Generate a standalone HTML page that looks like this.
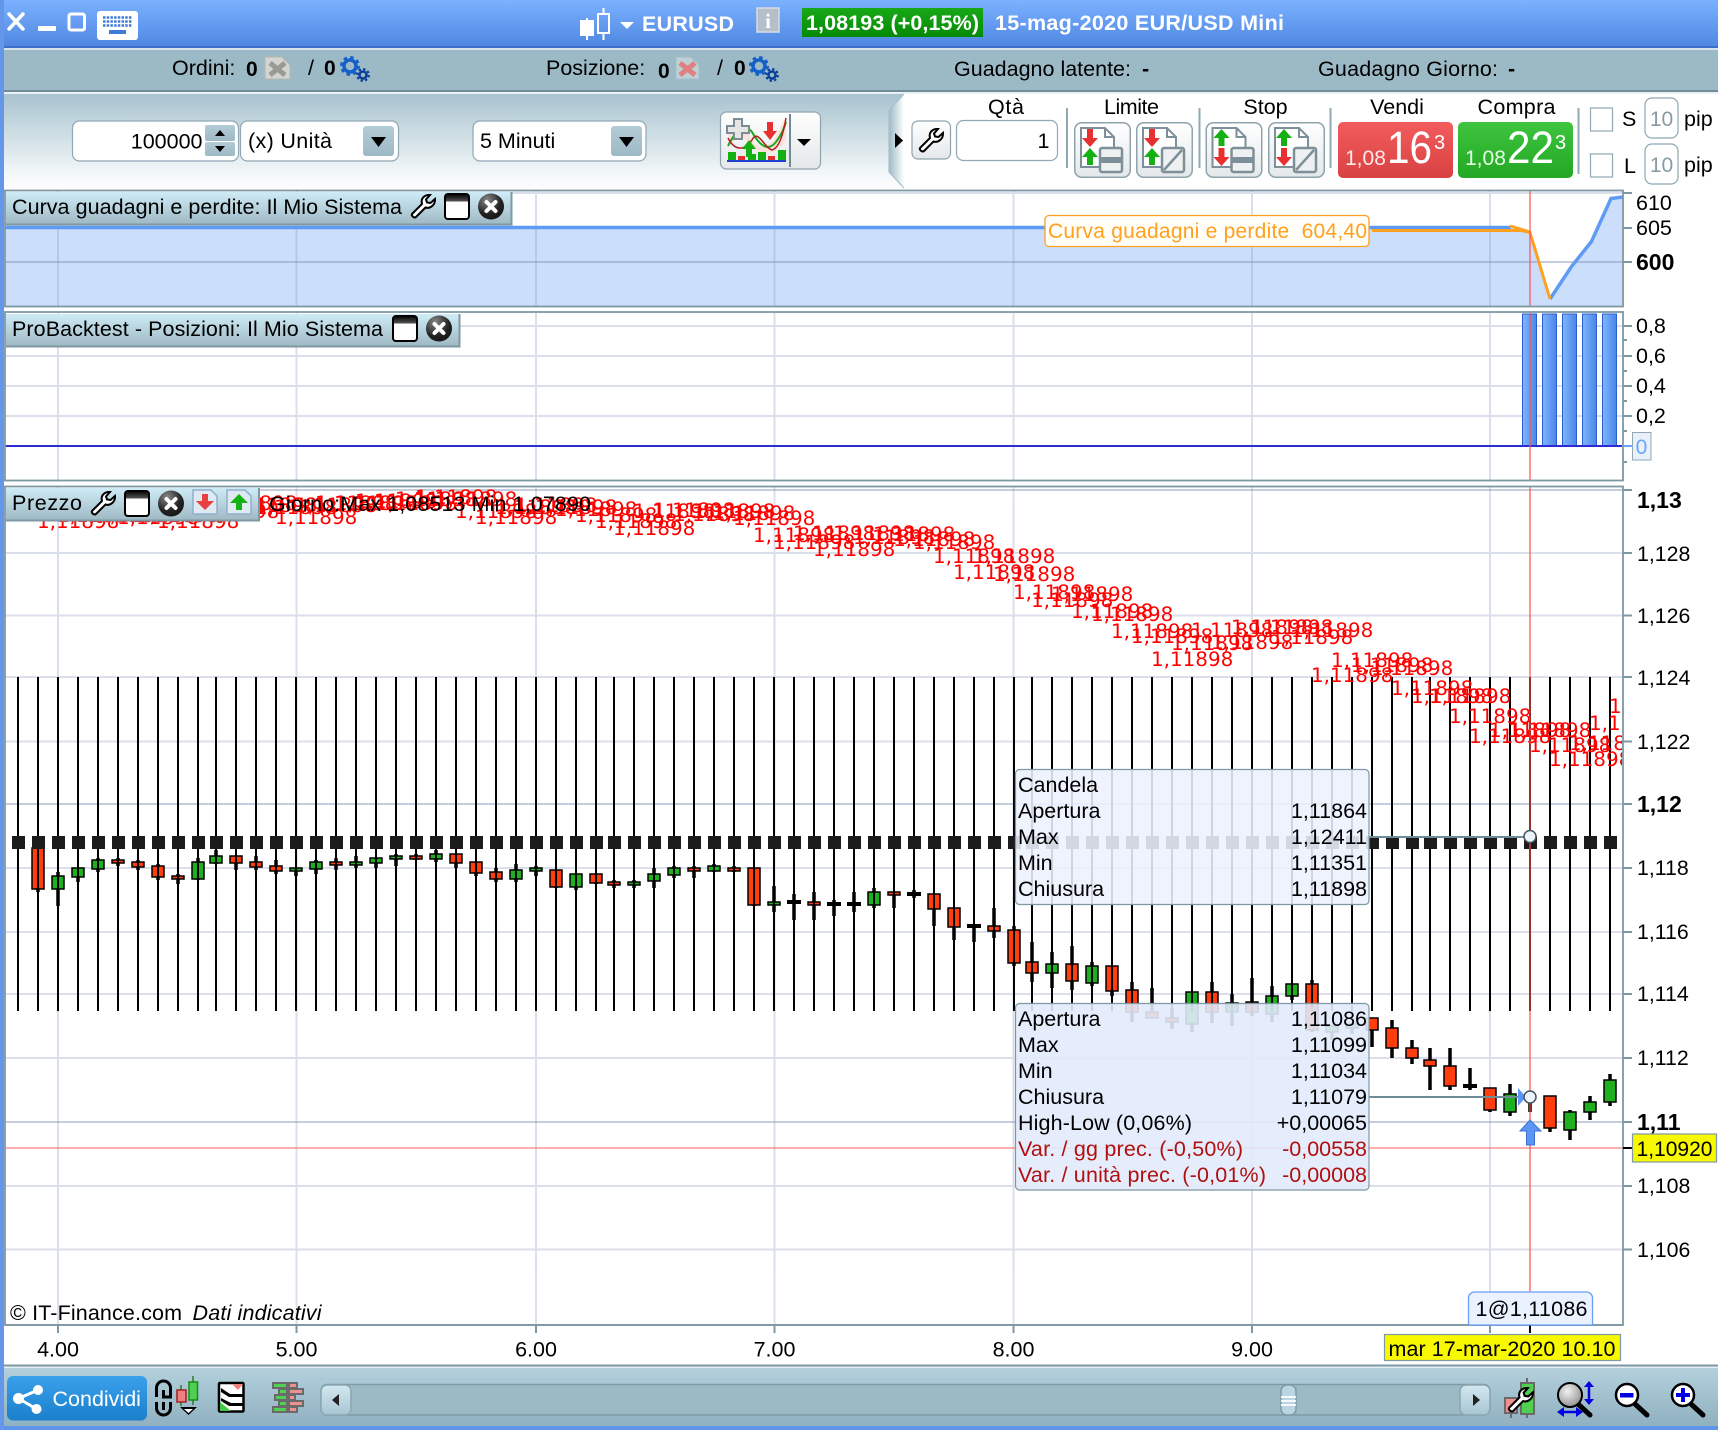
<!DOCTYPE html>
<html lang="it"><head><meta charset="utf-8"><title>EURUSD</title>
<style>html,body{margin:0;padding:0;background:#fff;overflow:hidden}svg{display:block;font-family:"Liberation Sans",Arial,sans-serif}</style></head>
<body>
<svg xmlns="http://www.w3.org/2000/svg" width="1718" height="1430" viewBox="0 0 1718 1430">
<defs>
<linearGradient id="gT" x1="0" y1="0" x2="0" y2="1"><stop offset="0" stop-color="#7bb1ff"/><stop offset="1" stop-color="#5088e2"/></linearGradient>
<linearGradient id="gTb" x1="0" y1="0" x2="0" y2="1"><stop offset="0" stop-color="#a8c3cf"/><stop offset=".8" stop-color="#f0f5f7"/><stop offset="1" stop-color="#fff"/></linearGradient>
<linearGradient id="gNotch" x1="0" y1="0" x2="1" y2="0"><stop offset="0" stop-color="#9dbac6"/><stop offset="1" stop-color="#fff"/></linearGradient>
<linearGradient id="gTab" x1="0" y1="0" x2="0" y2="1"><stop offset="0" stop-color="#cfebf6"/><stop offset="1" stop-color="#9db8c3"/></linearGradient>
<linearGradient id="gDd" x1="0" y1="0" x2="0" y2="1"><stop offset="0" stop-color="#b4ccd6"/><stop offset="1" stop-color="#9cb9c5"/></linearGradient>
<linearGradient id="gBtn" x1="0" y1="0" x2="0" y2="1"><stop offset="0" stop-color="#fff"/><stop offset="1" stop-color="#e4e8ea"/></linearGradient>
<linearGradient id="gR" x1="0" y1="0" x2="0" y2="1"><stop offset="0" stop-color="#f25c5c"/><stop offset="1" stop-color="#d84242"/></linearGradient>
<linearGradient id="gG" x1="0" y1="0" x2="0" y2="1"><stop offset="0" stop-color="#3fc43f"/><stop offset="1" stop-color="#22a822"/></linearGradient>
<linearGradient id="gGp" x1="0" y1="0" x2="0" y2="1"><stop offset="0" stop-color="#18a818"/><stop offset="1" stop-color="#068a06"/></linearGradient>
<linearGradient id="gBar" x1="0" y1="0" x2="1" y2="0"><stop offset="0" stop-color="#80b6fd"/><stop offset="1" stop-color="#4a85e8"/></linearGradient>
<linearGradient id="gBot" x1="0" y1="0" x2="0" y2="1"><stop offset="0" stop-color="#b3d0dc"/><stop offset="1" stop-color="#90b1c1"/></linearGradient>
<linearGradient id="gShare" x1="0" y1="0" x2="0" y2="1"><stop offset="0" stop-color="#3aa0ea"/><stop offset="1" stop-color="#1a80cc"/></linearGradient>
<linearGradient id="gWin" x1="0" y1="0" x2="0" y2="1"><stop offset="0" stop-color="#000"/><stop offset=".3" stop-color="#555"/><stop offset=".31" stop-color="#fff"/></linearGradient>
<linearGradient id="gSb" x1="0" y1="0" x2="0" y2="1"><stop offset="0" stop-color="#d4e8f1"/><stop offset="1" stop-color="#a6c6d3"/></linearGradient>
<radialGradient id="gCl" cx=".35" cy=".25" r=".9"><stop offset="0" stop-color="#888"/><stop offset=".6" stop-color="#222"/><stop offset="1" stop-color="#111"/></radialGradient>
<radialGradient id="gLens" cx=".4" cy=".35" r=".7"><stop offset="0" stop-color="#f2f2f2"/><stop offset="1" stop-color="#8e8e8e"/></radialGradient>
<clipPath id="cP3"><rect x="5" y="487" width="1618" height="838"/></clipPath>
<symbol id="wr" viewBox="0 0 26 26" overflow="visible"><path d="M2 21 12 11C10.500 6 14 1.500 20 2L16 6.500 17 9.500 20.500 10 25 6C25.500 12 20 16 15.500 14.500L6 24C4.500 25.500 1 23 2 21Z" fill="#fff" stroke="#000" stroke-width="2"/></symbol>
<symbol id="win" viewBox="0 0 26 27"><rect x="1" y="1" width="24" height="25" rx="3" fill="url(#gWin)" stroke="#000" stroke-width="2"/></symbol>
<symbol id="cl" viewBox="0 0 26 27"><circle cx="13" cy="13.500" r="13" fill="url(#gCl)"/><path d="M8.500 9 17.500 18M17.500 9 8.500 18" stroke="#fff" stroke-width="4" stroke-linecap="round"/></symbol>
<symbol id="gear" viewBox="0 0 30 26"><circle cx="10" cy="10" r="6" fill="none" stroke="#1560c8" stroke-width="3.500"/><circle cx="10" cy="10" r="8.500" fill="none" stroke="#1560c8" stroke-width="3" stroke-dasharray="3.400 3.270"/><circle cx="23" cy="19" r="3.500" fill="none" stroke="#0c3f98" stroke-width="2.500"/><circle cx="23" cy="19" r="5.800" fill="none" stroke="#0c3f98" stroke-width="2.200" stroke-dasharray="2.400 2.150"/></symbol>
<symbol id="ddb" viewBox="0 0 31 30"><rect x="0" y="0" width="31" height="30" rx="3" fill="url(#gDd)"/><path d="M8 11H23L15.500 21Z" fill="#000"/></symbol>
<symbol id="b1" viewBox="0 0 57 56"><rect x=".75" y=".75" width="55.500" height="54.500" rx="7" fill="url(#gBtn)" stroke="#8fa3ac" stroke-width="1.500"/><path d="M7 6H31L40 15V45H7Z" fill="#fff" stroke="#7d8f98" stroke-width="2"/><path d="M31 6V15H40" fill="none" stroke="#7d8f98" stroke-width="2"/><rect x="26" y="26" width="22" height="24" rx="2" fill="#eef0f1" stroke="#7d8f98" stroke-width="2.500"/></symbol>
</defs>

<!-- window chrome -->
<rect width="1718" height="1430" fill="#fff"/>
<rect x="0" y="0" width="1718" height="46" fill="url(#gT)"/>
<rect x="0" y="46" width="1718" height="2" fill="#3d6fc8"/>
<rect x="0" y="48" width="1718" height="2" fill="#d5e3ea"/>
<rect x="4" y="50" width="1714" height="40" fill="#9cbac6"/>
<rect x="4" y="90" width="1714" height="2" fill="#6f8c98"/>
<rect x="4" y="92" width="1714" height="2" fill="#e8f0f3"/>
<rect x="4" y="94" width="900" height="96" fill="url(#gTb)"/>
<path d="M904 94 889 110V172L904 188Z" fill="url(#gNotch)"/>
<path d="M904 94 889 110V172L904 188" fill="none" stroke="#a9bfc9" stroke-width="1.200"/>

<!-- title bar -->
<path d="M9 14 23 29M23 14 9 29" stroke="#fff" stroke-width="3.500" stroke-linecap="round"/>
<rect x="38" y="26" width="18" height="5" rx="1" fill="#fff"/>
<rect x="69" y="14" width="15.500" height="16" rx="2" fill="none" stroke="#fff" stroke-width="3"/>
<rect x="97" y="11" width="41" height="29" rx="3" fill="#fff"/>
<path d="M103 17.500h29M103 21.500h29M103 25.500h29" stroke="#3f7bd8" stroke-width="2.500" stroke-dasharray="2.500 1.200"/>
<rect x="109" y="30" width="17" height="4" fill="#3f7bd8"/>
<rect x="580" y="20" width="14" height="16" fill="#fff"/><path d="M587 18V40" stroke="#fff" stroke-width="2"/>
<rect x="598" y="14" width="11" height="19" fill="none" stroke="#fff" stroke-width="2"/><path d="M603.500 8V14M603.500 33V40" stroke="#fff" stroke-width="2"/>
<path d="M620 22H634L627 29Z" fill="#fff"/>
<text x="642" y="31" font-size="21.500" font-weight="700" fill="#fff" textLength="92">EURUSD</text>
<rect x="757" y="8" width="22" height="24" fill="#b4bfca" stroke="#d6dde3" stroke-width="1.500"/>
<text x="768" y="28" font-size="21" font-weight="700" text-anchor="middle" fill="#fff" font-family="Liberation Serif">i</text>
<rect x="802" y="8" width="181" height="29" fill="url(#gGp)"/>
<text x="892.500" y="30" font-size="21.500" font-weight="700" text-anchor="middle" fill="#fff" textLength="173">1,08193 (+0,15%)</text>
<text x="995" y="30" font-size="21.500" font-weight="700" fill="#fff" textLength="289">15-mag-2020  EUR/USD Mini</text>

<!-- status bar -->
<text x="172" y="75" font-size="21.500">Ordini:</text>
<text x="246" y="76" font-size="21" font-weight="700">0</text>
<path d="M265 57H282L290 65V79H265Z" fill="#d4d4d0" stroke="#b5b5b0"/><path d="M270 63 285 75M285 63 270 75" stroke="#9a9a95" stroke-width="5"/>
<text x="308" y="75" font-size="21.500">/</text>
<text x="324" y="75" font-size="21" font-weight="700">0</text>
<use href="#gear" x="340" y="56" width="30" height="26"/>
<text x="546" y="75" font-size="21.500">Posizione:</text>
<text x="658" y="78" font-size="21" font-weight="700">0</text>
<path d="M676 57H691L699 65V79H676Z" fill="#bdd0d8" stroke="#a8bcc5"/><path d="M680 63 695 75M695 63 680 75" stroke="#e08080" stroke-width="5"/>
<text x="717" y="75" font-size="21.500">/</text>
<text x="734" y="75" font-size="21" font-weight="700">0</text>
<use href="#gear" x="749" y="56" width="30" height="26"/>
<text x="954" y="76" font-size="21.500" textLength="177">Guadagno latente:</text>
<text x="1142" y="76" font-size="21.500" font-weight="700">-</text>
<text x="1318" y="76" font-size="21.500" textLength="180">Guadagno Giorno:</text>
<text x="1508" y="76" font-size="21.500" font-weight="700">-</text>

<!-- toolbar left -->
<rect x="72.500" y="121" width="166" height="40" rx="7" fill="#fff" stroke="#8fa8b4" stroke-width="1.200"/>
<text x="202.500" y="148.500" font-size="21.500" text-anchor="end">100000</text>
<rect x="205" y="125" width="30" height="16" rx="2" fill="url(#gDd)"/><rect x="205" y="142" width="30" height="14" rx="2" fill="url(#gDd)"/>
<path d="M215 136H225L220 130ZM215 146H225L220 152Z" fill="#000"/>
<rect x="240.500" y="121" width="158" height="40" rx="7" fill="#fff" stroke="#8fa8b4" stroke-width="1.200"/>
<text x="248" y="148" font-size="21.500" textLength="84">(x) Unità</text>
<use href="#ddb" x="363" y="126" width="31" height="30"/>
<rect x="473" y="121" width="173" height="40" rx="7" fill="#fff" stroke="#8fa8b4" stroke-width="1.200"/>
<text x="480" y="148" font-size="21.500">5 Minuti</text>
<use href="#ddb" x="611" y="126" width="31" height="30"/>
<rect x="720.500" y="112" width="100" height="57" rx="6" fill="url(#gBtn)" stroke="#8fa3ac" stroke-width="1.200"/>
<rect x="789" y="114" width="2" height="53" fill="#6f8c98"/>
<path d="M797 139H811L804 146Z" fill="#000"/>
<path d="M728 136C738 120 744 124 752 140C758 150 770 150 778 132 782 124 784 120 786 116V140C780 150 768 158 756 150 748 142 742 134 738 138 732 142 728 148 728 146Z" fill="#ffdcd5" opacity=".8"/>
<path d="M728 146C736 130 744 122 752 132C760 146 768 152 776 142C782 134 784 128 786 122" fill="none" stroke="#1ea81e" stroke-width="2"/>
<path d="M728 138C734 150 744 152 752 140C758 128 764 148 772 150 780 148 784 130 786 118" fill="none" stroke="#b42020" stroke-width="1.500"/>
<path d="M734 119H742V126H749V133H742V139H734V133H727V126H734Z" fill="#e6e6e6" stroke="#7c8c94" stroke-width="2"/>
<path d="M767 122h6v9h4l-7 9-7-9h4z" fill="#e83030"/>
<path d="M749 140l7 9h-4v8h-6v-8h-4z" fill="#14b014"/>
<path d="M728 152h8v8h-8zM758 152h8v8h-8zM778 150h8v10h-8z" fill="#14b014"/>
<path d="M738 156h7v4h-7zM768 156h7v4h-7z" fill="#e03030"/><path d="M748 154h8v6h-8z" fill="#14b014"/>
<rect x="727" y="160" width="59" height="2" fill="#2040d0"/>

<!-- toolbar right -->
<path d="M895 133 903 140.500 895 148Z" fill="#000"/>
<rect x="912" y="121" width="38.500" height="38" rx="6" fill="url(#gBtn)" stroke="#8fa3ac" stroke-width="1.200"/>
<use href="#wr" x="918" y="127" width="26" height="26"/>
<text x="1006" y="114" font-size="21.500" text-anchor="middle" textLength="36">Qtà</text>
<rect x="956.500" y="120.500" width="101" height="40" rx="7" fill="#fff" stroke="#8fa8b4" stroke-width="1.200"/>
<text x="1049.500" y="148" font-size="21.500" text-anchor="end">1</text>
<path d="M1067 108V168M1199.500 108V168M1330.500 108V168M1578.500 108V174" stroke="#8fa8b4" stroke-width="2"/>
<text x="1131.500" y="114" font-size="21.500" text-anchor="middle" textLength="55">Limite</text>
<text x="1265.500" y="114" font-size="21.500" text-anchor="middle">Stop</text>
<text x="1397" y="114" font-size="21.500" text-anchor="middle">Vendi</text>
<text x="1516.500" y="114" font-size="21.500" text-anchor="middle" textLength="78">Compra</text>
<use href="#b1" x="1074" y="122" width="57" height="56"/>
<g transform="translate(1074 122)"><rect x="26" y="35" width="22" height="6" fill="#7d8f98"/><path d="M13 7h6v9h5l-8 9-8-9h5z" fill="#e83030"/><path d="M16 26l8 9h-5v8h-6v-8h-5z" fill="#14b014"/></g>
<use href="#b1" x="1136" y="122" width="57" height="56"/>
<g transform="translate(1136 122)"><path d="M28 48 46 28" stroke="#7d8f98" stroke-width="2.500"/><path d="M13 7h6v9h5l-8 9-8-9h5z" fill="#e83030"/><path d="M16 26l8 9h-5v8h-6v-8h-5z" fill="#14b014"/></g>
<use href="#b1" x="1205.500" y="122" width="57" height="56"/>
<g transform="translate(1205.500 122)"><rect x="26" y="35" width="22" height="6" fill="#7d8f98"/><path d="M16 7l8 9h-5v8h-6v-8h-5z" fill="#14b014"/><path d="M13 26h6v9h5l-8 9-8-9h5z" fill="#e83030"/></g>
<use href="#b1" x="1268" y="122" width="57" height="56"/>
<g transform="translate(1268 122)"><path d="M28 48 46 28" stroke="#7d8f98" stroke-width="2.500"/><path d="M16 7l8 9h-5v8h-6v-8h-5z" fill="#14b014"/><path d="M13 26h6v9h5l-8 9-8-9h5z" fill="#e83030"/></g>
<rect x="1338" y="122" width="115" height="56" rx="5" fill="url(#gR)"/>
<text x="1345" y="165" font-size="21" fill="#ffe8e8">1,08</text>
<text x="1387" y="163" font-size="45" fill="#fff" textLength="45" lengthAdjust="spacingAndGlyphs">16</text>
<text x="1434" y="149" font-size="20" fill="#fff">3</text>
<rect x="1458" y="122" width="115" height="56" rx="5" fill="url(#gG)"/>
<text x="1465" y="165" font-size="21" fill="#e6ffe6">1,08</text>
<text x="1507" y="163" font-size="45" fill="#fff" textLength="47" lengthAdjust="spacingAndGlyphs">22</text>
<text x="1555" y="149" font-size="20" fill="#fff">3</text>
<rect x="1590.500" y="108" width="22" height="23" fill="#fff" stroke="#8fa8b4" stroke-width="1.200"/>
<rect x="1590.500" y="154" width="22" height="23" fill="#fff" stroke="#8fa8b4" stroke-width="1.200"/>
<text x="1622" y="126" font-size="21.500">S</text><text x="1624" y="173" font-size="21.500" font-weight="400">L</text>
<rect x="1645" y="98" width="33" height="40" rx="7" fill="#fff" stroke="#8fa8b4" stroke-width="1.200"/>
<rect x="1645" y="144" width="33" height="40" rx="7" fill="#fff" stroke="#8fa8b4" stroke-width="1.200"/>
<text x="1661.500" y="126" font-size="21" text-anchor="middle" fill="#8a9aa5">10</text><text x="1661.500" y="172" font-size="21" text-anchor="middle" fill="#8a9aa5">10</text>
<text x="1684" y="126" font-size="21.500">pip</text><text x="1684" y="172" font-size="21.500">pip</text>

<!-- panel 1 -->
<path d="M5 228H1510.500L1530 232 1550 299 1571.500 266.500 1591.500 241.500 1611 198.500 1623 197V306H5Z" fill="#cbdffc"/>
<g stroke="#8090b8" stroke-width="2" opacity=".28" fill="none">
<path d="M58 191V306M296.500 191V306M536 191V306M774.500 191V306M1013.500 191V306M1252 191V306M1490 191V306"/>
<path d="M5 193H1623"/>
</g>
<path d="M5 262H1623" stroke="#8090b8" stroke-width="2" opacity=".45"/>
<path d="M5 227.500H1511" stroke="#5f9bf5" stroke-width="3.500" fill="none"/>
<path d="M1550 299 1571.500 266.500 1591.500 241.500 1611 198.500 1623 197" stroke="#5f9bf5" stroke-width="3.500" fill="none"/>
<path d="M1372 230.500H1521L1530 232.500 1550 299" stroke="#ffa020" stroke-width="3" fill="none"/>
<path d="M1510 226 1530 232" stroke="#ffa020" stroke-width="3" fill="none"/>

<!-- panel 2 -->
<g stroke="#8090b8" stroke-width="2" opacity=".28" fill="none">
<path d="M58 313V480M296.500 313V480M536 313V480M774.500 313V480M1013.500 313V480M1252 313V480M1490 313V480"/>
<path d="M5 326H1623M5 356H1623M5 386H1623M5 416H1623"/>
</g>
<g fill="url(#gBar)" stroke="#2a5ed0" stroke-width="1">
<rect x="1522.500" y="314" width="14" height="132"/><rect x="1542.500" y="314" width="14" height="132"/><rect x="1562.500" y="314" width="14" height="132"/><rect x="1582.500" y="314" width="14" height="132"/><rect x="1602.500" y="314" width="14" height="132"/>
</g>
<path d="M5 446H1622" stroke="#2c2cd4" stroke-width="2"/>

<!-- panel 3 grid -->
<g stroke="#8090b8" stroke-width="2" opacity=".28" fill="none">
<path d="M58 487V1325M296.500 487V1325M536 487V1325M774.500 487V1325M1013.500 487V1325M1252 487V1325M1490 487V1325"/>
<path d="M5 553H1623M5 615.500H1623M5 677H1623M5 741.500H1623M5 868H1623M5 932H1623M5 994H1623M5 1058H1623M5 1186H1623M5 1249.500H1623"/>
</g>
<path d="M5 490H1623M5 804H1623M5 1122H1623" stroke="#8090b8" stroke-width="2" opacity=".45" fill="none"/>

<!-- wicks -->
<path fill="none" stroke="#000" stroke-width="3.500" d="M38 848V892M58 872V906M78 868V882M98 858V872M118 858V866M138 860V870M158 864V880M178 874V884M198 858V880M216 850V864M236 856V870M256 856V870M276 860V874M296 868V876M316 860V874M336 858V870M356 856V868M376 858V868M396 854V866M416 854V860M436 850V862M456 854V868M476 862V876M496 868V882M516 864V882M536 866V876M556 870V888M576 874V890M596 874V884M614 880V888M634 880V888M654 868V888M674 866V878M694 866V878M714 864V872M734 866V872M754 868V906M774 886V912M794 894V920M814 892V920M834 900V916M854 892V912M874 888V908M894 892V908M914 890V898M934 894V926M954 908V940M974 924V942M994 908V938M1014 926V966M1032 942V982M1052 952V988M1072 946V990M1092 962V986M1112 966V996M1132 982V1022M1152 988V1018M1172 1008V1029M1192 992V1032M1212 982V1023M1232 994V1026M1252 978V1016M1272 986V1022M1292 984V1000M1312 980V1032M1332 1026V1040M1352 1024V1034M1372 1018V1047M1392 1020V1058M1412 1040V1064M1430 1048V1090M1450 1048V1090M1470 1068V1090M1490 1088V1112M1510 1084V1116M1530 1094V1112M1550 1096V1132M1570 1110V1140M1590 1096V1120M1610 1074V1106"/>
<!-- red bodies -->
<path fill="#ff3d0d" stroke="#000" stroke-width="1.500" d="M32 848h12v41h-12zM112 860h12v3h-12zM132 862h12v5h-12zM152 866h12v11h-12zM172 876h12v3h-12zM230 856h12v7h-12zM250 862h12v5h-12zM270 866h12v5h-12zM330 862h12v3h-12zM410 856h12v3h-12zM450 854h12v9h-12zM470 862h12v11h-12zM490 872h12v7h-12zM550 870h12v17h-12zM590 874h12v9h-12zM608 882h12v3h-12zM688 868h12v3h-12zM728 868h12v3h-12zM748 868h12v37h-12zM808 902h12v3h-12zM888 892h12v3h-12zM928 894h12v15h-12zM948 908h12v19h-12zM988 926h12v5h-12zM1008 930h12v33h-12zM1026 962h12v11h-12zM1066 964h12v17h-12zM1106 966h12v25h-12zM1126 990h12v22h-12zM1146 1012h12v6h-12zM1166 1018h12v4h-12zM1206 992h12v20h-12zM1246 1002h12v10h-12zM1306 984h12v46h-12zM1366 1018h12v12h-12zM1386 1028h12v20h-12zM1406 1048h12v10h-12zM1424 1060h12v6h-12zM1444 1066h12v20h-12zM1484 1088h12v22h-12zM1544 1096h12v32h-12z"/>
<!-- green bodies -->
<path fill="#1eb01e" stroke="#000" stroke-width="1.500" d="M52 876h12v13h-12zM72 868h12v9h-12zM92 860h12v9h-12zM192 862h12v17h-12zM210 856h12v7h-12zM290 868h12v3h-12zM310 862h12v7h-12zM350 862h12v3h-12zM370 858h12v5h-12zM390 856h12v3h-12zM430 854h12v5h-12zM510 870h12v9h-12zM530 868h12v3h-12zM570 874h12v13h-12zM628 882h12v3h-12zM648 874h12v7h-12zM668 868h12v7h-12zM708 866h12v5h-12zM768 902h12v3h-12zM868 892h12v13h-12zM1046 964h12v9h-12zM1086 966h12v17h-12zM1186 992h12v32h-12zM1226 1003h12v9h-12zM1266 996h12v18h-12zM1286 984h12v12h-12zM1326 1026h12v6h-12zM1346 1024h12v4h-12zM1504 1094h12v18h-12zM1564 1112h12v18h-12zM1584 1102h12v10h-12zM1604 1080h12v22h-12z"/>
<!-- doji bars -->
<path fill="#000" d="M787 900h14v4h-14zM827 902h14v4h-14zM847 902h14v4h-14zM907 892h14v4h-14zM967 924h14v4h-14zM1463 1084h14v4h-14z"/>
<!-- sticks -->
<path fill="none" stroke="#000" stroke-width="2" d="M18 677V1011M38 677V1011M58 677V1011M78 677V1011M98 677V1011M118 677V1011M138 677V1011M158 677V1011M178 677V1011M198 677V1011M216 677V1011M236 677V1011M256 677V1011M276 677V1011M296 677V1011M316 677V1011M336 677V1011M356 677V1011M376 677V1011M396 677V1011M416 677V1011M436 677V1011M456 677V1011M476 677V1011M496 677V1011M516 677V1011M536 677V1011M556 677V1011M576 677V1011M596 677V1011M614 677V1011M634 677V1011M654 677V1011M674 677V1011M694 677V1011M714 677V1011M734 677V1011M754 677V1011M774 677V1011M794 677V1011M814 677V1011M834 677V1011M854 677V1011M874 677V1011M894 677V1011M914 677V1011M934 677V1011M954 677V1011M974 677V1011M994 677V1011M1014 677V1011M1032 677V1011M1052 677V1011M1072 677V1011M1092 677V1011M1112 677V1011M1132 677V1011M1152 677V1011M1172 677V1011M1192 677V1011M1212 677V1011M1232 677V1011M1252 677V1011M1272 677V1011M1292 677V1011M1312 677V1011M1332 677V1011M1352 677V1011M1372 677V1011M1392 677V1011M1412 677V1011M1430 677V1011M1450 677V1011M1470 677V1011M1490 677V1011M1510 677V1011M1530 677V1011M1550 677V1011M1570 677V1011M1590 677V1011M1610 677V1011"/>
<!-- black squares -->
<path fill="#1b1b1b" d="M12 836h13v13h-13zM32 836h13v13h-13zM52 836h13v13h-13zM72 836h13v13h-13zM92 836h13v13h-13zM112 836h13v13h-13zM132 836h13v13h-13zM152 836h13v13h-13zM172 836h13v13h-13zM192 836h13v13h-13zM210 836h13v13h-13zM230 836h13v13h-13zM250 836h13v13h-13zM270 836h13v13h-13zM290 836h13v13h-13zM310 836h13v13h-13zM330 836h13v13h-13zM350 836h13v13h-13zM370 836h13v13h-13zM390 836h13v13h-13zM410 836h13v13h-13zM430 836h13v13h-13zM450 836h13v13h-13zM470 836h13v13h-13zM490 836h13v13h-13zM510 836h13v13h-13zM530 836h13v13h-13zM550 836h13v13h-13zM570 836h13v13h-13zM590 836h13v13h-13zM608 836h13v13h-13zM628 836h13v13h-13zM648 836h13v13h-13zM668 836h13v13h-13zM688 836h13v13h-13zM708 836h13v13h-13zM728 836h13v13h-13zM748 836h13v13h-13zM768 836h13v13h-13zM788 836h13v13h-13zM808 836h13v13h-13zM828 836h13v13h-13zM848 836h13v13h-13zM868 836h13v13h-13zM888 836h13v13h-13zM908 836h13v13h-13zM928 836h13v13h-13zM948 836h13v13h-13zM968 836h13v13h-13zM988 836h13v13h-13zM1008 836h13v13h-13zM1026 836h13v13h-13zM1046 836h13v13h-13zM1066 836h13v13h-13zM1086 836h13v13h-13zM1106 836h13v13h-13zM1126 836h13v13h-13zM1146 836h13v13h-13zM1166 836h13v13h-13zM1186 836h13v13h-13zM1206 836h13v13h-13zM1226 836h13v13h-13zM1246 836h13v13h-13zM1266 836h13v13h-13zM1286 836h13v13h-13zM1306 836h13v13h-13zM1326 836h13v13h-13zM1346 836h13v13h-13zM1366 836h13v13h-13zM1386 836h13v13h-13zM1406 836h13v13h-13zM1424 836h13v13h-13zM1444 836h13v13h-13zM1464 836h13v13h-13zM1484 836h13v13h-13zM1504 836h13v13h-13zM1524 836h13v13h-13zM1544 836h13v13h-13zM1564 836h13v13h-13zM1584 836h13v13h-13zM1604 836h13v13h-13z"/>

<!-- red labels -->
<g clip-path="url(#cP3)" fill="#ff0000" font-family="'DejaVu Sans',sans-serif" font-size="19.900" transform="translate(-1 0)">
<text x="38" y="528">1,11898</text><text x="58" y="522">1,11898</text><text x="78" y="521">1,11898</text><text x="98" y="522">1,11898</text><text x="118" y="524">1,11898</text><text x="138" y="522">1,11898</text><text x="158" y="528">1,11898</text><text x="178" y="520">1,11898</text><text x="198" y="518">1,11898</text><text x="216" y="510">1,11898</text><text x="236" y="512">1,11898</text><text x="256" y="514">1,11898</text><text x="276" y="524">1,11898</text><text x="296" y="512">1,11898</text><text x="316" y="510">1,11898</text><text x="336" y="510">1,11898</text><text x="356" y="508">1,11898</text><text x="376" y="510">1,11898</text><text x="396" y="506">1,11898</text><text x="416" y="504">1,11898</text><text x="436" y="506">1,11898</text><text x="456" y="518">1,11898</text><text x="476" y="524">1,11898</text><text x="496" y="514">1,11898</text><text x="516" y="512">1,11898</text><text x="536" y="514">1,11898</text><text x="556" y="516">1,11898</text><text x="576" y="522">1,11898</text><text x="596" y="528">1,11898</text><text x="614" y="535">1,11898</text><text x="634" y="518">1,11898</text><text x="654" y="517">1,11898</text><text x="674" y="521">1,11898</text><text x="694" y="518">1,11898</text><text x="714" y="520">1,11898</text><text x="734" y="525">1,11898</text><text x="754" y="542">1,11898</text><text x="774" y="549">1,11898</text><text x="794" y="540">1,11898</text><text x="814" y="556">1,11898</text><text x="834" y="540">1,11898</text><text x="854" y="544">1,11898</text><text x="874" y="541">1,11898</text><text x="894" y="546">1,11898</text><text x="914" y="549">1,11898</text><text x="934" y="563">1,11898</text><text x="954" y="579">1,11898</text><text x="974" y="563">1,11898</text><text x="994" y="581">1,11898</text><text x="1014" y="599">1,11898</text><text x="1032" y="607">1,11898</text><text x="1052" y="601">1,11898</text><text x="1072" y="618">1,11898</text><text x="1092" y="621">1,11898</text><text x="1112" y="638">1,11898</text><text x="1132" y="643">1,11898</text><text x="1152" y="666">1,11898</text><text x="1172" y="650">1,11898</text><text x="1192" y="637">1,11898</text><text x="1212" y="649">1,11898</text><text x="1232" y="634">1,11898</text><text x="1252" y="634">1,11898</text><text x="1272" y="644">1,11898</text><text x="1292" y="637">1,11898</text><text x="1312" y="682">1,11898</text><text x="1332" y="667">1,11898</text><text x="1352" y="672">1,11898</text><text x="1372" y="675">1,11898</text><text x="1392" y="695">1,11898</text><text x="1412" y="703">1,11898</text><text x="1430" y="703">1,11898</text><text x="1450" y="723">1,11898</text><text x="1470" y="743">1,11898</text><text x="1490" y="737">1,11898</text><text x="1510" y="737">1,11898</text><text x="1530" y="752">1,11898</text><text x="1550" y="766">1,11898</text><text x="1570" y="750">1,11898</text><text x="1590" y="730">1,11898</text><text x="1610" y="713">1,11898</text>
</g>
<text x="269" y="511" font-size="21.500" textLength="322">Giorno:Max 1,08513 Min 1,07890</text>

<!-- crosshair -->
<path d="M5 1148H1623" stroke="#ff5a5a" stroke-width="1.500" opacity=".65"/>
<path d="M1530 191V306M1530 313V480M1530 487V1325" stroke="#ff5050" stroke-width="2" opacity=".6" fill="none"/>

<!-- tooltips -->
<path d="M1369 837H1525M1369 1097H1525" stroke="#6e8c98" stroke-width="2"/>
<path d="M1518 1088 1526 1097 1518 1106Z" fill="#5b96f5"/>
<circle cx="1530" cy="836.500" r="6" fill="#eef3fb" stroke="#44565e" stroke-width="1.500"/>
<circle cx="1530" cy="1097" r="6" fill="#eef3fb" stroke="#44565e" stroke-width="1.500"/>
<path d="M1530 1120 1541 1131H1534.500V1145H1526.500V1131H1520Z" fill="#5b96f5" stroke="#3a70d0" stroke-width="1"/>
<rect x="1015.500" y="769.500" width="353.500" height="135" rx="4" fill="#ecf1fe" fill-opacity=".88" stroke="#7e98a4" stroke-width="1.200"/>
<rect x="1015.500" y="1003.500" width="353.500" height="186.500" rx="4" fill="#e2eafb" fill-opacity=".9" stroke="#7e98a4" stroke-width="1.200"/>
<g font-size="21.500">
<text x="1018" y="792">Candela</text>
<text x="1018" y="818">Apertura</text><text x="1367" y="818" text-anchor="end">1,11864</text>
<text x="1018" y="844">Max</text><text x="1367" y="844" text-anchor="end">1,12411</text>
<text x="1018" y="870">Min</text><text x="1367" y="870" text-anchor="end">1,11351</text>
<text x="1018" y="896">Chiusura</text><text x="1367" y="896" text-anchor="end">1,11898</text>
<text x="1018" y="1026">Apertura</text><text x="1367" y="1026" text-anchor="end">1,11086</text>
<text x="1018" y="1052">Max</text><text x="1367" y="1052" text-anchor="end">1,11099</text>
<text x="1018" y="1078">Min</text><text x="1367" y="1078" text-anchor="end">1,11034</text>
<text x="1018" y="1104">Chiusura</text><text x="1367" y="1104" text-anchor="end">1,11079</text>
<text x="1018" y="1130" textLength="174">High-Low (0,06%)</text><text x="1367" y="1130" text-anchor="end">+0,00065</text>
<g fill="#b01010"><text x="1018" y="1156" textLength="225">Var. / gg prec. (-0,50%)</text><text x="1367" y="1156" text-anchor="end">-0,00558</text>
<text x="1018" y="1182" textLength="248">Var. / unità prec. (-0,01%)</text><text x="1367" y="1182" text-anchor="end">-0,00008</text></g>
</g>

<!-- orange label -->
<rect x="1045" y="215.500" width="324" height="31" rx="4" fill="#fffef8" stroke="#ffa020" stroke-width="1.300"/>
<text x="1048" y="238" font-size="21" fill="#ffa020" xml:space="preserve" textLength="319">Curva guadagni e perdite  604,40</text>

<!-- panel borders -->
<g fill="none" stroke="#7e98a4" stroke-width="1.800">
<rect x="5" y="190.500" width="1618" height="116"/>
<rect x="5" y="312" width="1618" height="168.500"/>
<rect x="5" y="486.500" width="1618" height="838.500"/>
</g>
<rect x="5" y="307.500" width="1640" height="3.500" fill="#fff"/>

<!-- axis ticks -->
<path fill="none" stroke="#7e98a4" stroke-width="2" d="M1623 193H1632M1623 228H1632M1623 262H1632M1623 326H1632M1623 356H1632M1623 386H1632M1623 416H1632M1623 490H1632M1623 553H1632M1623 615.500H1632M1623 677H1632M1623 741.500H1632M1623 804H1632M1623 868H1632M1623 932H1632M1623 994H1632M1623 1058H1632M1623 1122H1632M1623 1186H1632M1623 1249.500H1632M1623 340H1627M1623 371H1627M1623 401H1627M1623 431H1627M1623 462H1627"/>
<path d="M1623 446H1632" stroke="#6aa5ff" stroke-width="2"/>
<path d="M1623 1148H1632" stroke="#000" stroke-width="2"/>
<g font-size="21.500">
<text x="1636" y="210">610</text><text x="1636" y="235">605</text><text x="1636" y="270" font-weight="700" font-size="23">600</text>
<text x="1636" y="333">0,8</text><text x="1636" y="363">0,6</text><text x="1636" y="393">0,4</text><text x="1636" y="423">0,2</text>
</g>
<rect x="1632.500" y="432.500" width="18.500" height="27.500" fill="#e9f0f8" stroke="#8fa8b4"/>
<text x="1641.500" y="454" font-size="21" text-anchor="middle" fill="#6aa5ff">0</text>
<g font-size="21.300">
<text x="1637" y="508" font-weight="700" font-size="23">1,13</text><text x="1637" y="561">1,128</text><text x="1637" y="623">1,126</text><text x="1637" y="685">1,124</text><text x="1637" y="749">1,122</text><text x="1637" y="812" font-weight="700" font-size="23">1,12</text><text x="1637" y="875">1,118</text><text x="1637" y="939">1,116</text><text x="1637" y="1001">1,114</text><text x="1637" y="1065">1,112</text><text x="1637" y="1130" font-weight="700" font-size="23">1,11</text><text x="1637" y="1193">1,108</text><text x="1637" y="1257">1,106</text>
</g>
<rect x="1632.500" y="1134" width="84" height="28" fill="#f8f800" stroke="#7e98a4" stroke-width="1.200"/>
<text x="1674.500" y="1156" font-size="21" text-anchor="middle">1,10920</text>

<!-- tabs -->
<rect x="6" y="192" width="505" height="33" fill="url(#gTab)"/><path d="M6 224.500H511.500V192" fill="none" stroke="#7e98a4" stroke-width="2"/>
<text x="12" y="214" font-size="21.500" textLength="390">Curva guadagni e perdite: Il Mio Sistema</text>
<use href="#wr" x="410" y="193" width="26" height="26"/><use href="#win" x="444" y="193" width="26" height="27"/><use href="#cl" x="478" y="193" width="26" height="27"/>
<rect x="6" y="314" width="453.500" height="33" fill="url(#gTab)"/><path d="M6 346.500H459.500V314" fill="none" stroke="#7e98a4" stroke-width="2"/>
<text x="12" y="336" font-size="21.500" textLength="371">ProBacktest - Posizioni: Il Mio Sistema</text>
<use href="#win" x="392" y="315" width="26" height="27"/><use href="#cl" x="426" y="315" width="26" height="27"/>
<rect x="6" y="488" width="253" height="33" fill="url(#gTab)"/><path d="M6 520.500H259V488" fill="none" stroke="#7e98a4" stroke-width="2"/>
<text x="12" y="510" font-size="21.500" textLength="70">Prezzo</text>
<use href="#wr" x="90" y="490" width="26" height="26"/><use href="#win" x="124" y="490" width="26" height="27"/><use href="#cl" x="158" y="490" width="26" height="27"/>
<path d="M193 490H211L217 496V514H193Z" fill="#dfe9f2" stroke="#8fb0cc" stroke-width="1.500"/><path d="M202 494h6v7h6l-9 9-9-9h6z" fill="#e84040"/>
<path d="M227 490H245L251 496V514H227Z" fill="#dfe9f2" stroke="#8fb0cc" stroke-width="1.500"/><path d="M239 494l9 9h-6v7h-6v-7h-6z" fill="#14b014"/>

<!-- copyright, x axis -->
<text x="10" y="1320" font-size="21.500" textLength="172">© IT-Finance.com</text>
<text x="192.500" y="1320" font-size="21.500" font-style="italic" textLength="129">Dati indicativi</text>
<path d="M5 1325H1623" stroke="#7e98a4" stroke-width="1.800"/>
<path fill="none" stroke="#7e98a4" stroke-width="2" d="M58 1325V1333M296.500 1325V1333M536 1325V1333M774.500 1325V1333M1013.500 1325V1333M1252 1325V1333M1490 1325V1333"/>
<path d="M1530 1325V1333" stroke="#000" stroke-width="2"/>
<g font-size="21.500" text-anchor="middle">
<text x="58" y="1356.500">4.00</text><text x="296.500" y="1356.500">5.00</text><text x="536" y="1356.500">6.00</text><text x="774.500" y="1356.500">7.00</text><text x="1013.500" y="1356.500">8.00</text><text x="1252" y="1356.500">9.00</text>
</g>
<path d="M1468.500 1325V1298a6 6 0 0 1 6-6H1586.500a6 6 0 0 1 6 6V1325Z" fill="#eaf2ff" stroke="#6a9ff5" stroke-width="1.300"/>
<text x="1531.500" y="1316" font-size="21.500" text-anchor="middle" textLength="112">1@1,11086</text>
<rect x="1384.500" y="1334.500" width="236" height="26" fill="#f8f800" stroke="#7e98a4" stroke-width="1.200"/>
<text x="1502" y="1356" font-size="21.500" text-anchor="middle" textLength="227">mar 17-mar-2020 10.10</text>

<!-- bottom bar -->
<rect x="0" y="1364.500" width="1718" height="2" fill="#7e98a4"/>
<rect x="0" y="1366.500" width="1718" height="2" fill="#e4eef2"/>
<rect x="4" y="1368" width="1714" height="58" fill="url(#gBot)"/>
<rect x="0" y="1426" width="1718" height="4" fill="#5f95e8"/>
<rect x="0" y="0" width="4" height="1430" fill="#6496ea"/>
<rect x="7" y="1376" width="140" height="44.500" rx="6" fill="url(#gShare)"/>
<path d="M38 1390 18.500 1398.500 36.500 1409" fill="none" stroke="#fff" stroke-width="3"/>
<circle cx="38" cy="1390" r="5" fill="#fff"/><circle cx="18.500" cy="1398.500" r="5.500" fill="#fff"/><circle cx="36.500" cy="1409" r="5" fill="#fff"/>
<text x="52.500" y="1406" font-size="21.500" fill="#fff">Condividi</text>
<!-- link + candles -->
<g fill="none" stroke="#000" stroke-width="3">
<path d="M156.500 1397V1388a7 7 0 0 1 14 0V1397H163.500V1390"/>
<path d="M156.500 1402V1408a7 7 0 0 0 14 0V1402M163.500 1402V1410"/>
</g>
<path d="M181 1385V1406M193 1376V1405" stroke="#2a7a2a" stroke-width="1.500"/>
<rect x="177" y="1390" width="9" height="12" fill="#f08080" stroke="#a02020" stroke-width="1.500"/>
<rect x="189" y="1382" width="8.500" height="18" fill="#50d050" stroke="#1a8a1a" stroke-width="1.500"/>
<path d="M180 1407H197L188.500 1415Z" fill="#000"/><path d="M184 1409H193L188.500 1413Z" fill="#fff"/>
<!-- list icon -->
<rect x="219" y="1383" width="24.500" height="28.500" rx="1" fill="#fff" stroke="#000" stroke-width="2.500"/>
<path d="M232 1384H243L238 1390Z" fill="#f08080"/><path d="M220 1411V1402L231 1411Z" fill="#45c845"/>
<path d="M221 1388 230 1394 243 1394V1397H229L221 1392ZM221 1398 231 1403 243 1403V1406H229L221 1401Z" fill="#000"/>
<!-- book icon -->
<g stroke="#6a6a6a" stroke-width="2">
<rect x="273" y="1383" width="14" height="5" fill="#50d050"/><rect x="289" y="1383" width="8" height="5" fill="#f09090"/>
<rect x="279" y="1389" width="8" height="5" fill="#50d050"/><rect x="289" y="1389" width="14" height="5" fill="#f09090"/>
<rect x="275" y="1395" width="12" height="5" fill="#50d050"/><rect x="289" y="1395" width="6" height="5" fill="#f09090"/>
<rect x="279" y="1401" width="8" height="5" fill="#50d050"/><rect x="289" y="1401" width="14" height="5" fill="#f09090"/>
<rect x="273" y="1407" width="14" height="5" fill="#50d050"/><rect x="289" y="1407" width="8" height="5" fill="#f09090"/>
</g>
<!-- scrollbar -->
<rect x="321" y="1384.500" width="1169" height="30.500" rx="6" fill="#9cb9c6" stroke="#7e9aa6" stroke-width="1.500"/>
<rect x="321" y="1385" width="30" height="30" rx="6" fill="url(#gSb)" stroke="#8aa6b2" stroke-width="1.500"/>
<path d="M339 1394V1406L332 1400Z" fill="#222"/>
<rect x="1460" y="1385" width="30" height="30" rx="6" fill="url(#gSb)" stroke="#8aa6b2" stroke-width="1.500"/>
<path d="M1473 1394V1406L1480 1400Z" fill="#222"/>
<rect x="1281" y="1385" width="15" height="30" rx="6" fill="#b9d6e2" stroke="#7e9aa6" stroke-width="1.500"/>
<path d="M1281 1397H1296M1281 1401H1296M1281 1405H1296" stroke="#fff" stroke-width="1.800"/>
<!-- wrench candles -->
<path d="M1511 1398V1418M1527 1378V1418" stroke="#6a6a6a" stroke-width="2"/>
<rect x="1505" y="1398" width="12" height="15" fill="#f09090" stroke="#6a6a6a" stroke-width="2"/>
<rect x="1521" y="1383" width="13" height="31" fill="#50d050" stroke="#6a6a6a" stroke-width="2"/>
<use href="#wr" x="1507" y="1386" width="27" height="27"/>
<!-- zoom icons -->
<path d="M1578 1404 1590 1415" stroke="#000" stroke-width="5" stroke-linecap="round"/>
<circle cx="1570" cy="1395" r="12" fill="url(#gLens)" stroke="#000" stroke-width="2"/>
<path d="M1589 1384V1401" stroke="#0000e0" stroke-width="2.500"/><path d="M1584 1387 1589 1381 1594 1387ZM1584 1399 1589 1405 1594 1399Z" fill="#0000e0"/>
<path d="M1562 1412H1578" stroke="#0000e0" stroke-width="2.500"/><path d="M1564 1407 1557 1412 1564 1417ZM1576 1407 1583 1412 1576 1417Z" fill="#0000e0"/>
<path d="M1635 1404 1647 1415" stroke="#000" stroke-width="5" stroke-linecap="round"/>
<circle cx="1627" cy="1395" r="11" fill="#fff" stroke="#000" stroke-width="2.500"/>
<rect x="1620" y="1393" width="13.500" height="4.500" fill="#0000e0"/>
<path d="M1691 1404 1703 1415" stroke="#000" stroke-width="5" stroke-linecap="round"/>
<circle cx="1683" cy="1395" r="11" fill="#fff" stroke="#000" stroke-width="2.500"/>
<path d="M1676 1395H1690M1683 1388V1402" stroke="#0000e0" stroke-width="4"/>
</svg>
</body></html>
